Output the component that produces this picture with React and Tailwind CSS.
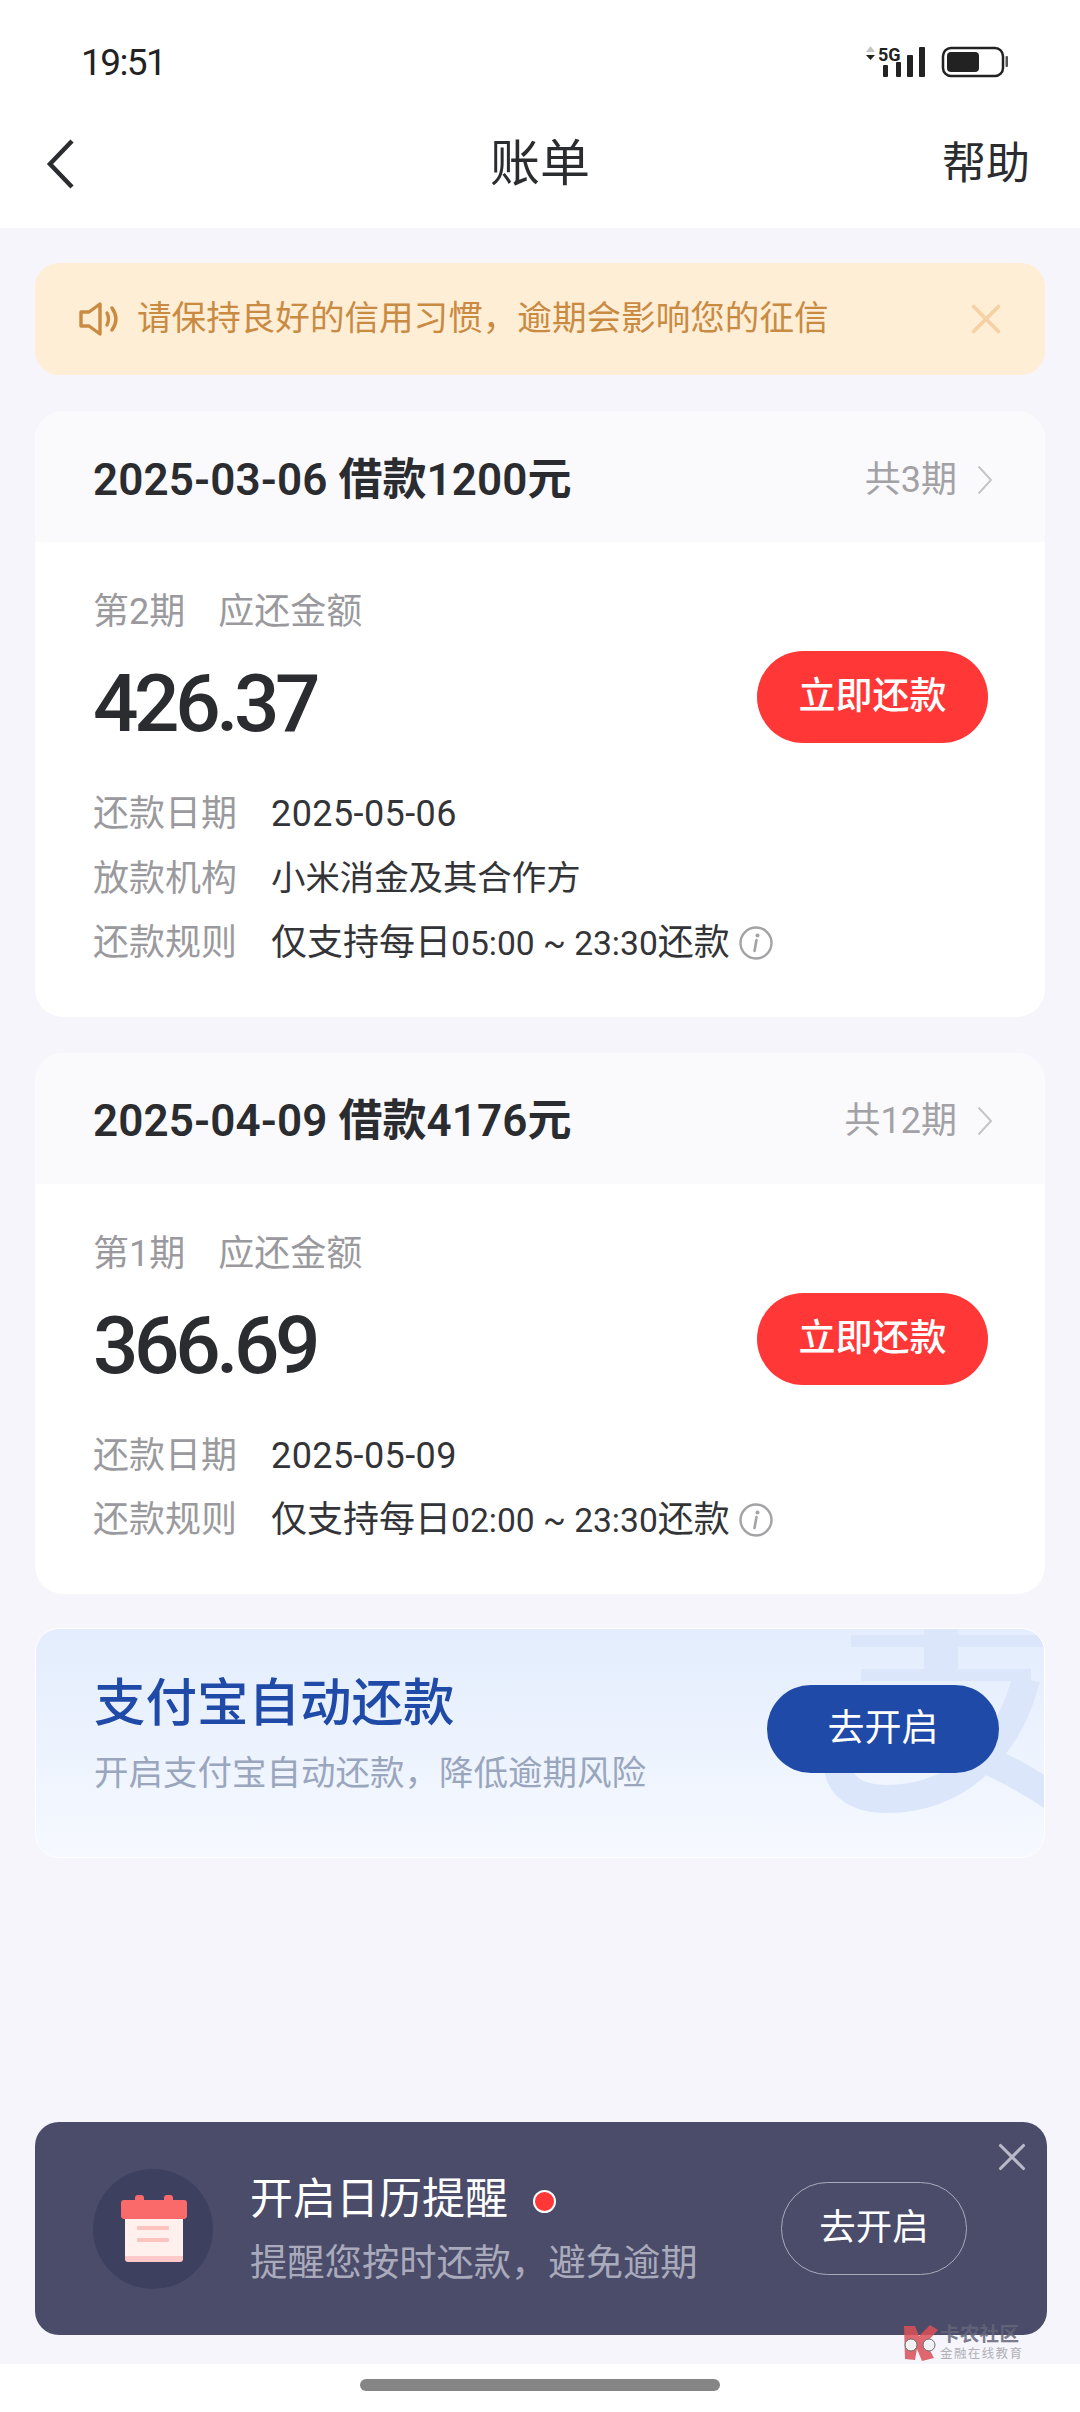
import React from 'react';
import { X } from 'lucide-react';

const font = { fontFamily: 'Roboto, "Noto Sans CJK SC", sans-serif' };

const bills = [
  {
    head: '2025-03-06',
    loan: '借款1200元',
    total: '共3期',
    period: '第2期',
    amount: '426.37',
    time: '05:00 ~ 23:30',
    date: '2025-05-06',
    lender: '小米消金及其合作方',
  },
  {
    head: '2025-04-09',
    loan: '借款4176元',
    total: '共12期',
    period: '第1期',
    amount: '366.69',
    time: '02:00 ~ 23:30',
    date: '2025-05-09',
  },
];

const StatusIcons = () => (
  <svg width="145" height="36" viewBox="0 0 145 36" className="overflow-visible">
    <path d="M1 8 L5.5 2 L10 8Z" fill="#c4c4c4" />
    <path d="M1 11 L10 11 L5.5 16Z" fill="#222" />
    <text x="13" y="17" fontSize="18" fontWeight="700" fill="#222" fontFamily="Roboto">5G</text>
    <rect x="18" y="21" width="5" height="12" rx="1" fill="#222" />
    <rect x="31" y="18" width="5" height="15" rx="1" fill="#222" />
    <rect x="42" y="11" width="6" height="22" rx="1" fill="#222" />
    <rect x="54" y="3" width="6" height="30" rx="1" fill="#222" />
    <rect x="78" y="4" width="60" height="28" rx="8" fill="none" stroke="#222" strokeWidth="2.5" />
    <rect x="82" y="8" width="32" height="20" rx="4" fill="#222" />
    <rect x="140.5" y="12" width="2.5" height="11" rx="1" fill="#555" />
  </svg>
);

const SpeakerIcon = () => (
  <svg width="40" height="36" viewBox="0 0 40 36" fill="none" stroke="#c98a42" strokeWidth="3.4" strokeLinejoin="round" strokeLinecap="round">
    <path d="M2 11 H10 L21 3 V33 L10 25 H2Z" />
    <path d="M28 12 C30 16 30 20 28 24" />
    <path d="M33 7 C38 14 38 22 33 29" />
  </svg>
);

const InfoIcon = () => (
  <svg width="36" height="36" viewBox="0 0 36 36" fill="none" className="ml-[8px]">
    <circle cx="18" cy="18" r="15.5" stroke="#a3a3a6" strokeWidth="2.4" />
    <circle cx="19.5" cy="10.5" r="2" fill="#a3a3a6" />
    <path d="M18.5 15 L16.5 26" stroke="#a3a3a6" strokeWidth="2.6" strokeLinecap="round" />
  </svg>
);

const Chevron = () => (
  <svg width="16" height="30" viewBox="0 0 16 30" fill="none">
    <path d="M1.5 1.5 L14 15 L1.5 28.5" stroke="#c5c5c9" strokeWidth="2" />
  </svg>
);

const CalendarIcon = () => (
  <svg width="66" height="68" viewBox="0 0 66 68" className="ml-[2px]">
    <rect x="14" y="0" width="9" height="10" rx="3" fill="#fb6a6a" />
    <rect x="43" y="0" width="9" height="10" rx="3" fill="#fb6a6a" />
    <rect x="4" y="20" width="58" height="47" rx="3" fill="#fdc9c9" />
    <rect x="4" y="20" width="58" height="41" fill="#fff0ee" />
    <path d="M0 8 Q0 5 3 5 H63 Q66 5 66 8 V22 L64 24 H2 L0 22Z" fill="#fb6a6a" />
    <rect x="16" y="31" width="32" height="4" rx="1" fill="#fcc4bf" />
    <rect x="16" y="43" width="32" height="4" rx="1" fill="#fcc4bf" />
  </svg>
);

// the pale Alipay mark behind the auto-repay card
const AlipayMark = () => (
  <svg width="1010" height="230" viewBox="0 0 1010 230" fill="none" className="absolute left-0 top-0">
    <rect x="815" y="6" width="195" height="12" fill="#dbe6fb" />
    <rect x="888" y="0" width="34" height="45" fill="#dbe6fb" />
    <rect x="825" y="40" width="170" height="12" fill="#dbe6fb" />
    <path d="M990 50 C975 110 930 170 850 170 C815 170 795 150 805 125 C815 95 900 90 1020 170" stroke="#dbe6fb" strokeWidth="28" />
  </svg>
);

const Row = ({ label, children }) => (
  <div className="h-[64.5px] flex items-center text-[36px]">
    <span className="w-[178px] text-[#9a9a9e]">{label}</span>
    {children}
  </div>
);

const BillCard = ({ bill }) => (
  <div className="rounded-[28px] bg-white overflow-hidden">
    <div className="h-[131px] bg-[#fafafd] pl-[58px] pr-[52px] flex items-center justify-between">
      <div className="text-[44px] font-semibold text-[#2b2c30] leading-[50px] tracking-[0.1px] mt-[6px]">
        {bill.head} {bill.loan}
      </div>
      <div className="flex items-center text-[36px] text-[#a2a2a6] gap-[20px] mt-[6px]">
        {bill.total}
        <Chevron />
      </div>
    </div>
    <div className="pl-[58px] pr-[57px] pt-[45px] pb-[41px]">
      <div className="text-[36px] leading-[50px] text-[#9a9a9e] flex gap-[33px]">
        <span>{bill.period}</span>
        <span>应还金额</span>
      </div>
      <div className="flex items-center justify-between mt-[22px] h-[90px]">
        <div className="text-[80px] leading-[90px] font-medium text-[#2b2c30] tracking-[-4.4px]">{bill.amount}</div>
        <button className="w-[231px] h-[92px] -mt-[14px] rounded-full bg-[#ff3737] text-white text-[37px] font-medium">立即还款</button>
      </div>
      <div className="mt-[33px]">
        <Row label="还款日期">
          <span className="text-[#333438] tracking-[0.4px]">{bill.date}</span>
        </Row>
        {bill.lender && (
          <Row label="放款机构">
            <span className="text-[#333438] text-[34.4px]">{bill.lender}</span>
          </Row>
        )}
        <Row label="还款规则">
          <span className="text-[#333438]">
            仅支持每日<span className="text-[33.6px]">{bill.time}</span>还款
          </span>
          <InfoIcon />
        </Row>
      </div>
    </div>
  </div>
);

export default function App() {
  return (
    <div className="w-[1080px] h-[2412px] bg-[#f5f5fb] flex flex-col relative overflow-hidden" style={font}>
      <div className="bg-white h-[228px] shrink-0">
        <div className="h-[110px] pl-[81px] pr-[70px] flex items-center justify-between pt-[14px]">
          <span className="text-[37px] text-[#222] tracking-[-1.6px] mt-[2px]">19:51</span>
          <StatusIcons />
        </div>
        <div className="h-[100px] pl-[42px] pr-[50px] pt-[8px] flex items-center justify-between relative">
          <svg width="36" height="52" viewBox="0 0 36 52" fill="none">
            <path d="M30 3 L8 26 L30 49" stroke="#2b2c30" strokeWidth="4.5" />
          </svg>
          <span className="absolute left-0 right-0 text-center text-[50px] text-[#2b2c30]">账单</span>
          <span className="text-[44px] text-[#2b2c30]">帮助</span>
        </div>
      </div>

      <div className="px-[35px] pt-[35px] flex flex-col gap-[36px]">
        <div className="h-[112px] rounded-[24px] bg-[#ffeed6] pl-[44px] pr-[34px] flex items-center">
          <SpeakerIcon />
          <span className="ml-[18px] text-[34.6px] text-[#c98a42] flex-1">请保持良好的信用习惯，逾期会影响您的征信</span>
          <X size={50} strokeWidth={1.8} color="#f5d1a3" />
        </div>

        {bills.map((bill) => (
          <BillCard key={bill.head} bill={bill} />
        ))}

        <div className="h-[230px] -mt-[2px] rounded-[24px] border border-white bg-gradient-to-b from-[#e3edfd] to-[#f6f9ff] pl-[58px] pr-[45px] flex items-center justify-between relative overflow-hidden">
          <AlipayMark />
          <div className="relative -mt-[18px]">
            <div className="text-[51.5px] leading-[70px] font-medium text-[#1f4aa8]">支付宝自动还款</div>
            <div className="text-[34.5px] leading-[50px] mt-[9px] text-[#9aa6bd]">开启支付宝自动还款，降低逾期风险</div>
          </div>
          <button className="relative w-[232px] h-[88px] -mt-[28px] rounded-full bg-[#1f4aa8] text-white text-[37px]">去开启</button>
        </div>
      </div>

      <div className="mt-auto">
        <div className="ml-[35px] mr-[33px] mb-[29px] h-[213px] rounded-[24px] bg-[#4a4c6a] pl-[58px] pr-[80px] flex items-center relative">
          <div className="w-[120px] h-[120px] rounded-full bg-[#3e4060] flex items-center justify-center shrink-0">
            <CalendarIcon />
          </div>
          <div className="ml-[37px] flex-1">
            <div className="flex items-center text-[43px] leading-[60px] text-white">
              开启日历提醒
              <span className="ml-[25px] mt-[4px] w-[23px] h-[23px] rounded-full bg-[#ff3737] border-2 border-white" />
            </div>
            <div className="text-[37.3px] leading-[50px] mt-[9px] text-[#a9aabb]">提醒您按时还款，避免逾期</div>
          </div>
          <button className="w-[186px] h-[93px] rounded-full border border-[#a9aabb] text-white text-[36.5px]">去开启</button>
          <X size={46} strokeWidth={1.6} color="#b9bac8" className="absolute right-[12px] top-[12px]" />
        </div>
        <div className="bg-white h-[48px] pt-[15px]">
          <div className="w-[360px] h-[12px] mx-auto rounded-full bg-[#858585]" />
        </div>
      </div>

      {/* site watermark lying over the bottom banner */}
      <div className="absolute left-[902px] top-[2324px] flex items-center opacity-85">
        <svg width="40" height="38" viewBox="0 0 40 38">
          <path d="M2 2 H13 L17 12 L28 1 L36 6 L24 19 L32 34 L20 37 L15 25 L13 36 L3 35Z" fill="#dc5058" />
          <circle cx="9" cy="21" r="6" fill="#f2f2f4" stroke="#555" strokeWidth="1" />
          <circle cx="27" cy="21" r="6" fill="#f2f2f4" stroke="#555" strokeWidth="1" />
        </svg>
        <div className="ml-[-2px] flex flex-col items-start">
          <span className="text-[19.5px] leading-[22px] font-bold text-[#66677a] tracking-[0.3px]">卡农社区</span>
          <span className="text-[12.5px] leading-[16px] text-[#a5a5aa] tracking-[1.4px]">金融在线教育</span>
        </div>
      </div>
    </div>
  );
}
